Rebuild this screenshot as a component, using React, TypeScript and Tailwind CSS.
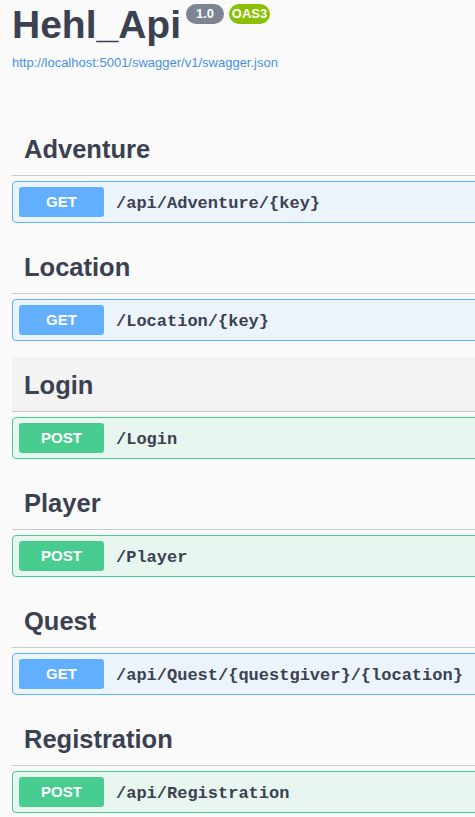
type Method = "GET" | "POST";

interface Endpoint {
  method: Method;
  path: string;
}

interface Tag {
  name: string;
  hovered?: boolean;
  ops: Endpoint[];
}

const tags: Tag[] = [
  { name: "Adventure", ops: [{ method: "GET", path: "/api/Adventure/{key}" }] },
  { name: "Location", ops: [{ method: "GET", path: "/Location/{key}" }] },
  { name: "Login", hovered: true, ops: [{ method: "POST", path: "/Login" }] },
  { name: "Player", ops: [{ method: "POST", path: "/Player" }] },
  { name: "Quest", ops: [{ method: "GET", path: "/api/Quest/{questgiver}/{location}" }] },
  { name: "Registration", ops: [{ method: "POST", path: "/api/Registration" }] },
];

const sans = { fontFamily: '"Liberation Sans", Arial, sans-serif' };
const mono = { fontFamily: '"Liberation Mono", "Courier New", monospace' };

function OpBlock({ op }: { op: Endpoint }) {
  const isGet = op.method === "GET";
  return (
    <div
      className={
        isGet
          ? "mt-[5px] flex h-[42px] items-center rounded-[4px] border border-[#61affe] bg-[#ebf3fb] pl-[6px]"
          : "mt-[5px] flex h-[42px] items-center rounded-[4px] border border-[#49cc90] bg-[#e8f6f0] pl-[6px]"
      }
    >
      <span
        className={
          isGet
            ? "flex h-[30px] w-[85px] items-center justify-center rounded-[3px] bg-[#61affe] text-[15px] font-bold text-white"
            : "flex h-[30px] w-[85px] items-center justify-center rounded-[3px] bg-[#49cc90] text-[15px] font-bold text-white"
        }
        style={sans}
      >
        {op.method}
      </span>
      <span className="ml-[12px] pt-[3px] text-[17px] font-bold text-[#3b4151]" style={mono}>
        {op.path}
      </span>
    </div>
  );
}

function TagSection({ tag }: { tag: Tag }) {
  return (
    <section className="mb-[17px]">
      <h3
        className={
          tag.hovered
            ? "flex h-[54px] items-center border-b border-[#c9cbcf] bg-[#f3f3f3] pl-[12px] pt-[2px] text-[25.5px] font-bold text-[#3b4151]"
            : "flex h-[54px] items-center border-b border-[#c9cbcf] pl-[12px] pt-[2px] text-[25.5px] font-bold text-[#3b4151]"
        }
        style={sans}
      >
        {tag.name}
      </h3>
      {tag.ops.map((op) => (
        <OpBlock key={op.path} op={op} />
      ))}
    </section>
  );
}

export default function App() {
  return (
    <div className="min-h-screen w-full overflow-hidden bg-[#fafafa]">
      <div className="w-[560px] pl-[12px]">
        <div className="h-[122px] pt-[5px]">
          <div className="flex items-start">
            <h2 className="text-[39px] font-bold leading-none text-[#3b4151]" style={sans}>
              Hehl_Api
            </h2>
            <div className="-mt-[1px] ml-[5px] flex gap-[5px]">
              <span
                className="flex h-[20px] w-[38px] items-center justify-center rounded-full bg-[#7d8492] text-[13px] font-bold text-white"
                style={sans}
              >
                1.0
              </span>
              <span
                className="flex h-[20px] w-[41px] items-center justify-center rounded-full bg-[#89bf04] text-[13px] font-bold text-white"
                style={sans}
              >
                OAS3
              </span>
            </div>
          </div>
          <a className="mt-[9px] block text-[13px] text-[#4990e2]" style={sans}>
            http://localhost:5001/swagger/v1/swagger.json
          </a>
        </div>
        {tags.map((t) => (
          <TagSection key={t.name} tag={t} />
        ))}
      </div>
    </div>
  );
}
